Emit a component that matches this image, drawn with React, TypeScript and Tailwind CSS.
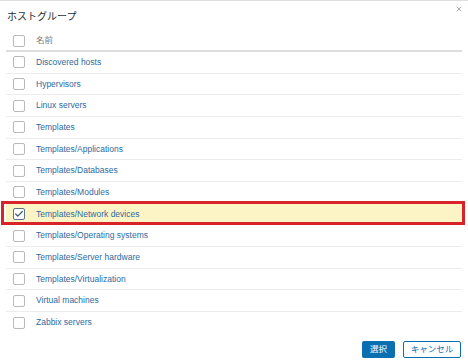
import { Check, X } from "lucide-react";

const groups = [
  "Discovered hosts",
  "Hypervisors",
  "Linux servers",
  "Templates",
  "Templates/Applications",
  "Templates/Databases",
  "Templates/Modules",
  "Templates/Network devices",
  "Templates/Operating systems",
  "Templates/Server hardware",
  "Templates/Virtualization",
  "Virtual machines",
  "Zabbix servers",
];

const selected = "Templates/Network devices";

function Box({ checked }: { checked?: boolean }) {
  return (
    <span
      className={
        "flex h-[12px] w-[12px] items-center justify-center rounded-[2px] border bg-white " +
        (checked ? "border-[#5a7489]" : "border-[#b9b9b9]")
      }
    >
      {checked && <Check size={10} strokeWidth={3} className="text-[#3d5a73]" />}
    </span>
  );
}

export default function App() {
  return (
    <div
      className="relative h-[364px] w-[468px] overflow-hidden border-t border-[#dedede] bg-white"
      style={{ fontFamily: '"Liberation Sans", Arial, "Noto Sans CJK JP", sans-serif' }}
    >
      <button className="absolute right-[5px] top-[4px] text-[#9a9a9a]">
        <X size={8} strokeWidth={2.5} />
      </button>

      <div className="px-[6px]">
        <h2 className="flex h-[30px] items-center pl-[1px] text-[10px] text-[#1f2c33]">ホストグループ</h2>

        <div className="flex h-[21px] items-center gap-[11px] border-b-2 border-[#dcdcdc] pl-[7px] text-[8.5px] text-[#7a7a7a]">
          <Box />
          <span>名前</span>
        </div>

        {groups.map((g, i) => {
          const on = g === selected;
          return (
            <div
              key={g}
              className={
                "relative flex h-[21.67px] items-center gap-[11px] pl-[7px] text-[8.5px] text-[#2d6a9f] " +
                (i < groups.length - 1 ? "border-b border-[#ececec] " : "") +
                (on ? "bg-[#fdf4c6]" : "")
              }
            >
              <Box checked={on} />
              <span>{g}</span>
              {on && (
                <span className="pointer-events-none absolute -bottom-[1px] -left-[5px] -right-[3px] -top-[3px] border-[3px] border-[#d9232b]" />
              )}
            </div>
          );
        })}

        <div className="mt-[7px] flex justify-end gap-[8px] pr-[1px]">
          <button className="flex h-[17px] w-[33px] items-center justify-center rounded-[2px] bg-[#0a6fb0] text-[8.5px] text-white">
            選択
          </button>
          <button className="flex h-[17px] w-[58px] items-center justify-center rounded-[2px] border border-[#0a6fb0] bg-white text-[8.5px] text-[#0a6fb0]">
            キャンセル
          </button>
        </div>
      </div>
    </div>
  );
}
